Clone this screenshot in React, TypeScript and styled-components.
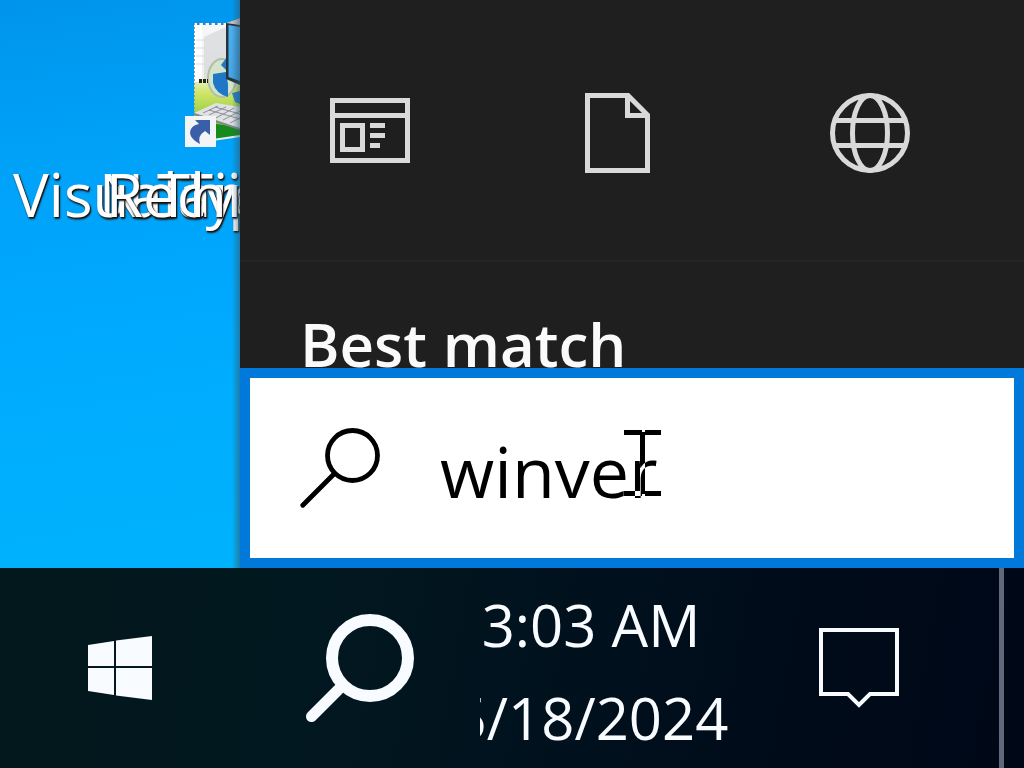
import React from 'react';
import styled, { createGlobalStyle } from 'styled-components';

const GlobalStyle = createGlobalStyle`
  * { box-sizing: border-box; }
  body { margin: 0; background: #000818; }
  body, button, input { font-family: "Open Sans", "Noto Sans", sans-serif; }
  button { border: 0; padding: 0; background: none; color: inherit; }
`;

const Screen = styled.div`
  min-height: 100vh;
  display: flex;
  flex-direction: column;
  overflow: hidden;
`;

const Workspace = styled.div`
  flex: 1;
  display: flex;
`;

const Desktop = styled.section`
  position: relative;
  flex: 0 0 240px;
  overflow: hidden;
  background: linear-gradient(172deg, #0094ec 0%, #00a2f8 28%, #00a9fe 55%, #00b3fd 100%);

  &::after {
    content: "";
    position: absolute;
    inset: 0 0 0 auto;
    width: 8px;
    background: linear-gradient(90deg, rgba(50, 85, 105, 0), rgba(50, 85, 105, 0.55));
  }
`;

const Shortcut = styled.button<{ $left: number }>`
  position: absolute;
  left: ${(p) => p.$left}px;
  top: 154px;
  font-size: 60px;
  line-height: 80px;
  white-space: nowrap;
  color: #fff;
  text-shadow: 1px 1px 1px #111, 1px 2px 2px #222;
`;

const ShortcutArt = styled.svg`
  position: absolute;
  left: 180px;
  top: 10px;
`;

const SearchPanel = styled.main`
  flex: 1;
  min-width: 0;
  display: flex;
  flex-direction: column;
  background: #1f1f1f;
`;

const Filters = styled.nav`
  display: flex;
  height: 262px;
  padding: 0 29px 0 5px;
  border-bottom: 2px solid #242426;
`;

const Filter = styled.button`
  flex: 1;
  display: flex;
  align-items: center;
  justify-content: center;
  padding-top: 5px;
  color: #d9d9d9;
`;

const Results = styled.section`
  flex: 1 0 106px;
  max-height: 106px;
  overflow: hidden;
  padding: 37px 60px 0;
`;

const Heading = styled.h2`
  margin: 0;
  font-size: 60px;
  line-height: 90px;
  font-weight: 600;
  white-space: nowrap;
  color: #fafafa;
`;

const SearchBox = styled.label`
  position: relative;
  display: flex;
  align-items: center;
  gap: 60px;
  height: 200px;
  margin-top: auto;
  padding: 0 50px;
  border: 10px solid #0079da;
  background: #fff;
  color: #000;
`;

const SearchInput = styled.input`
  flex: 1;
  min-width: 0;
  height: 100px;
  padding: 6px 0 0;
  border: 0;
  outline: 0;
  background: none;
  color: #000;
  font-size: 70px;
`;

const Cursor = styled.svg`
  position: absolute;
  left: 374px;
  top: 52px;
  mix-blend-mode: difference;
`;

const Taskbar = styled.footer`
  display: flex;
  height: 200px;
  color: #f8fbff;
  background: linear-gradient(100deg, #02181c 0%, #021820 30%, #01131e 50%, #000c1a 72%, #000818 100%);
`;

const TaskButton = styled.button`
  flex: 0 0 240px;
  display: flex;
  align-items: center;
  justify-content: center;
`;

const Clock = styled.button`
  flex: 0 0 260px;
  display: flex;
  flex-direction: column;
  align-items: center;
  padding: 10px 38px 0 0;
  overflow: hidden;
  font-size: 58px;
  line-height: 93px;
  white-space: nowrap;
`;

const ActionCenter = styled(TaskButton)`
  flex: 1;
  padding-right: 22px;
`;

const ShowDesktop = styled.button`
  flex: 0 0 25px;
  border-left: 5px solid #62677c;
`;

const shortcuts = [
  { name: 'Nearby', left: 99 },
  { name: 'Tip', left: 180 },
  { name: 'Visual', left: 13 },
  { name: 'Recycle', left: 106 },
  { name: 'This PC', left: 157 },
];

export default function App() {
  return (
    <Screen>
      <GlobalStyle />
      <Workspace>
        <Desktop aria-label="Desktop">
          <ShortcutArt width="60" height="145" viewBox="0 0 60 145" aria-hidden="true">
            <defs>
              <linearGradient id="paper" x1="0" y1="0" x2="0" y2="1">
                <stop offset="0" stopColor="#f6f7f8" />
                <stop offset="0.5" stopColor="#eeefee" />
                <stop offset="0.64" stopColor="#d4e66a" />
                <stop offset="1" stopColor="#72c22a" />
              </linearGradient>
              <linearGradient id="display" x1="0" y1="0" x2="1" y2="1">
                <stop offset="0" stopColor="#4fb2f0" />
                <stop offset="1" stopColor="#3b9ce0" />
              </linearGradient>
            </defs>
            <path d="M14 13H60V120H14z" fill="url(#paper)" />
            <path d="M14 13H22V72H14z" fill="#fff" />
            <path d="M24 27L46 17V42L60 50V70H24z" fill="#d5d7d8" opacity="0.7" />
            <path d="M17 13.500H46" stroke="#2386cc" strokeWidth="3" strokeDasharray="2.500 3.500" />
            <path d="M14.500 13V105" stroke="#8aa0a6" strokeWidth="1" strokeDasharray="2 2" />
            <path d="M16 30H26M16 38H26M16 46H26M16 54H26" stroke="#d8dce0" strokeWidth="1" />
            <ellipse cx="42" cy="68" rx="14" ry="19" fill="#d3e4ca" stroke="#b2bfaa" strokeWidth="2" />
            <path d="M33 64L46 62L48 74L48 87Q36 84 33 73z" fill="#1f78c6" />
            <path d="M41 55L47 47V61z" fill="#1f78c6" />
            <path d="M52 83L60 81V94L55 92z" fill="#2481ca" />
            <path d="M19 71H28" stroke="#20240f" strokeWidth="4" strokeDasharray="3 1" />
            <path d="M46 13L60 8V75L46 69z" fill="#26323c" />
            <path d="M48.500 15L60 17V71L48.500 67z" fill="url(#display)" />
            <path d="M46 13L60 8V15z" fill="#c3c6c9" />
            <path d="M36 114L60 117V126L36 129z" fill="#168a1c" />
            <path d="M36 129.500L60 126" stroke="#e4ece4" strokeWidth="2" />
            <path d="M14 103L36 93L60 97V119L36 110z" fill="#dfe1e4" />
            <path d="M14 104L38 112L60 119" fill="none" stroke="#85898e" strokeWidth="2" />
            <path d="M23 103L38 96M29 105L46 97M36 108L54 98M43 110L60 101M50 113L60 108M29 100L60 109M35 97L60 104" stroke="#8c9196" strokeWidth="1" />
            <path d="M5 106H36V137H5z" fill="#f3f4f6" />
            <path d="M15 110H30V125L25 121Q17 126 20 134Q7 127 11 119Q13 115 19 114z" fill="#3a5fa8" />
          </ShortcutArt>
          {shortcuts.map((s) => (
            <Shortcut key={s.name} $left={s.left}>{s.name}</Shortcut>
          ))}
        </Desktop>

        <SearchPanel>
          <Filters aria-label="Search filters">
            <Filter aria-label="Apps">
              <svg width="80" height="80" viewBox="0 0 80 80" fill="none" stroke="currentColor" strokeWidth="5">
                <path d="M2.500 7.500H77.500V67.500H2.500zM2.500 22.500H77.500" />
                <path d="M12.500 32.500H32.500V56.500H12.500z" />
                <path d="M40 32.500H55M40 42.500H55M40 52.500H50" />
              </svg>
            </Filter>
            <Filter aria-label="Documents">
              <svg width="80" height="80" viewBox="0 0 80 80" fill="none" stroke="currentColor" strokeWidth="5">
                <path d="M7.500 2.500H48L67.500 22V77.500H7.500zM47.500 2.500V22.500H67.500" />
              </svg>
            </Filter>
            <Filter aria-label="Web">
              <svg width="80" height="80" viewBox="0 0 80 80" fill="none" stroke="currentColor" strokeWidth="5">
                <circle cx="40" cy="40" r="37.500" />
                <ellipse cx="40" cy="40" rx="17.500" ry="37.500" />
                <path d="M5 27.500H75M5 52.500H75" />
              </svg>
            </Filter>
          </Filters>
          <Results>
            <Heading>Best match</Heading>
          </Results>
          <SearchBox>
            <svg width="80" height="80" viewBox="0 0 80 80" fill="none" stroke="currentColor" strokeWidth="4.800" strokeLinecap="round" aria-hidden="true">
              <circle cx="52.500" cy="27.500" r="25" />
              <path d="M34.500 45.500L2.800 77.200" />
            </svg>
            <SearchInput type="text" aria-label="Search" defaultValue="winver" spellCheck={false} />
            <Cursor width="37" height="66" viewBox="0 0 37 66" fill="#fff" aria-hidden="true">
              <path d="M0 0H18V2H21V0H37V5H21V61H37V66H21V64H18V66H0V61H16V5H0z" />
            </Cursor>
          </SearchBox>
        </SearchPanel>
      </Workspace>

      <Taskbar>
        <TaskButton aria-label="Start">
          <svg width="64" height="66" viewBox="0 0 64 66" fill="currentColor">
            <path d="M0 10L26 6V31H0zM28 5.500L64 1V31H28zM0 33H26V60L0 56zM28 33H64V65L28 60.500z" />
          </svg>
        </TaskButton>
        <TaskButton aria-label="Search">
          <svg width="120" height="120" viewBox="0 0 120 120" fill="none" stroke="currentColor" strokeLinecap="round">
            <circle cx="70" cy="50" r="38" strokeWidth="12" />
            <path d="M42 78L11.500 108.500" strokeWidth="11" />
          </svg>
        </TaskButton>
        <Clock>
          <span>3:03 AM</span>
          <span>5/18/2024</span>
        </Clock>
        <ActionCenter aria-label="Notifications">
          <svg width="80" height="80" viewBox="0 0 80 80" fill="none" stroke="currentColor" strokeWidth="4">
            <path d="M2 2H78V66H51L40 77L29 66H2z" />
          </svg>
        </ActionCenter>
        <ShowDesktop aria-label="Show desktop" />
      </Taskbar>
    </Screen>
  );
}
